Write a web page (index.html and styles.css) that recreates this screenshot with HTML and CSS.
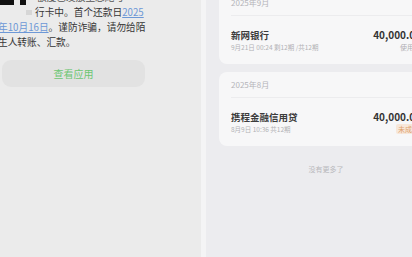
FILE: index.html
```html
<!DOCTYPE html>
<html lang="zh-CN">
<head>
    <meta charset="UTF-8">
    <meta name="viewport" content="width=device-width, initial-scale=1.0">
    <title>借款记录</title>
    <link rel="stylesheet" href="styles.css">
</head>
<body>
    <div class="page">
        <div class="chat-panel">
            <div class="message">
                <div class="line first-line">
                    <span class="redact wide"></span><span class="redact small"></span><span class="faded">额度已发放至您尾号</span>
                </div>
                <div class="line indent">
                    <span class="blur-box"></span>行卡中。首个还款日<a class="date-link">2025</a>
                </div>
                <div class="line">
                    <a class="date-link">年10月16日</a>。谨防诈骗，请勿给陌
                </div>
                <div class="line">生人转账、汇款。</div>
            </div>
            <button class="app-button">查看应用</button>
        </div>

        <div class="gutter"></div>

        <div class="record-panel">
            <div class="month-card">
                <div class="month-title">2025年9月</div>
                <div class="loan-row">
                    <div class="loan-info">
                        <div class="loan-name">新网银行</div>
                        <div class="loan-meta">9月21日 00:24 剩12期 /共12期</div>
                    </div>
                    <div class="loan-amount">
                        <div class="amount">40,000.00</div>
                        <div class="status">使用中</div>
                    </div>
                </div>
            </div>

            <div class="month-card">
                <div class="month-title">2025年8月</div>
                <div class="loan-row">
                    <div class="loan-info">
                        <div class="loan-name">携程金融信用贷</div>
                        <div class="loan-meta">8月9日 10:36 共12期</div>
                    </div>
                    <div class="loan-amount">
                        <div class="amount">40,000.00</div>
                        <div class="status failed">未成功</div>
                    </div>
                </div>
            </div>

            <div class="no-more">没有更多了</div>
        </div>
    </div>
</body>
</html>
```

FILE: styles.css
```css
body {
    margin: 0;
    padding: 0;
    width: 412px;
    height: 257px;
    overflow: hidden;
    font-family: "Noto Sans CJK SC", "Noto Sans", sans-serif;
    background-color: #ebebeb;
}
.page {
    display: flex;
    height: 257px;
}

/* left: chat message */
.chat-panel {
    width: 201px;
    flex-shrink: 0;
    background-color: #ebebeb;
}
.message {
    margin-top: -10px;
    margin-left: -2px;
    font-size: 9.7px;
    line-height: 15px;
    color: #363636;
}
.line {
    white-space: nowrap;
    height: 15px;
}
.first-line {
    display: flex;
    align-items: flex-end;
}
.redact {
    display: inline-block;
    background-color: #111;
    height: 14px;
}
.redact.wide {
    width: 16px;
    margin-right: 6px;
}
.redact.small {
    width: 6px;
    margin-right: 11px;
}
.faded {
    color: #555;
}
.indent {
    padding-left: 28px;
}
.blur-box {
    display: inline-block;
    width: 6px;
    height: 5px;
    background-color: #d6d6d6;
    margin-right: 3px;
    vertical-align: 1px;
}
.date-link {
    color: #6d98d6;
    text-decoration: underline;
}
.app-button {
    display: block;
    margin: 10px 0 0 2px;
    width: 143px;
    height: 27px;
    border: none;
    border-radius: 9px;
    background-color: #e2e2e2;
    color: #6cc672;
    font-family: inherit;
    font-size: 10px;
    padding: 0;
}

.gutter {
    width: 5px;
    flex-shrink: 0;
    background-color: #f4f4f5;
}

/* right: loan records */
.record-panel {
    width: 214px;
    flex-shrink: 0;
    padding-left: 13px;
    background-color: #ececef;
    display: flex;
    flex-direction: column;
    gap: 8px;
    margin-top: -10px;
}
.month-card {
    background-color: #f7f7f8;
    border-radius: 8px;
    padding: 0 12px;
    height: 74px;
    box-sizing: border-box;
}
.month-title {
    height: 25px;
    line-height: 25px;
    font-size: 8px;
    color: #b4b4b8;
    border-bottom: 1px solid #ececee;
}
.loan-row {
    display: flex;
    justify-content: space-between;
    padding-top: 12px;
}
.loan-name {
    font-size: 9.5px;
    line-height: 14px;
    font-weight: 700;
    color: #3c3c3c;
}
.loan-meta {
    font-size: 6.5px;
    line-height: 10px;
    color: #b2b2b6;
}
.loan-amount {
    display: flex;
    flex-direction: column;
    align-items: flex-end;
}
.amount {
    font-size: 10px;
    line-height: 14px;
    font-weight: 700;
    color: #333;
}
.status {
    font-size: 7px;
    line-height: 10px;
    color: #b0b0b4;
}
.status.failed {
    color: #e0a26e;
    background-color: #f7e7da;
    padding: 0 2px;
    border-radius: 2px;
}
.no-more {
    margin-top: 10px;
    text-align: center;
    font-size: 7px;
    color: #b8b8bc;
}
```
